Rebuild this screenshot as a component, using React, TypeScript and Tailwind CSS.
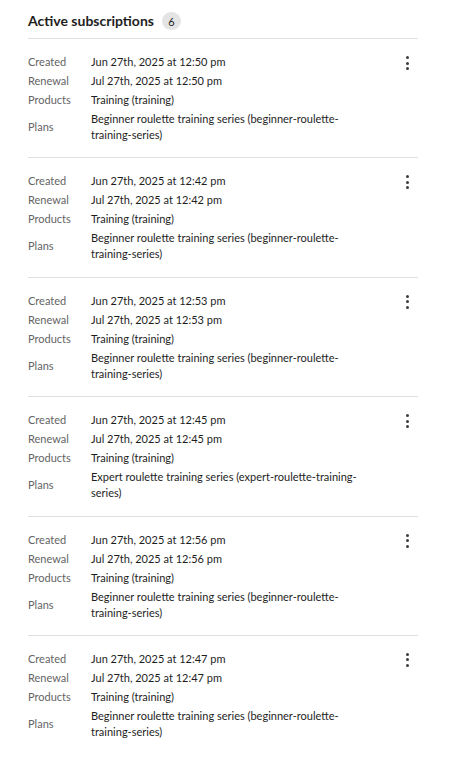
const subscriptions = [
  { created: "Jun 27th, 2025 at 12:50 pm", renewal: "Jul 27th, 2025 at 12:50 pm", plan: "Beginner roulette training series (beginner-roulette-training-series)" },
  { created: "Jun 27th, 2025 at 12:42 pm", renewal: "Jul 27th, 2025 at 12:42 pm", plan: "Beginner roulette training series (beginner-roulette-training-series)" },
  { created: "Jun 27th, 2025 at 12:53 pm", renewal: "Jul 27th, 2025 at 12:53 pm", plan: "Beginner roulette training series (beginner-roulette-training-series)" },
  { created: "Jun 27th, 2025 at 12:45 pm", renewal: "Jul 27th, 2025 at 12:45 pm", plan: "Expert roulette training series (expert-roulette-training-series)" },
  { created: "Jun 27th, 2025 at 12:56 pm", renewal: "Jul 27th, 2025 at 12:56 pm", plan: "Beginner roulette training series (beginner-roulette-training-series)" },
  { created: "Jun 27th, 2025 at 12:47 pm", renewal: "Jul 27th, 2025 at 12:47 pm", plan: "Beginner roulette training series (beginner-roulette-training-series)" },
];

function Kebab() {
  return (
    <button className="flex w-[6px] flex-col items-center gap-[2.5px]">
      <span className="h-[3px] w-[3px] rounded-full bg-[#3c3c3c]" />
      <span className="h-[3px] w-[3px] rounded-full bg-[#3c3c3c]" />
      <span className="h-[3px] w-[3px] rounded-full bg-[#3c3c3c]" />
    </button>
  );
}

export default function App() {
  return (
    <div className="min-h-screen bg-white pl-[28px] pr-[31px] pt-[12px] font-['Lato',sans-serif] text-[11px] text-[#1e1e1e]">
      <div className="flex items-center gap-[8px] pb-[8px]">
        <h2 className="text-[14px] font-bold leading-[18px] text-[#1e1e1e]">Active subscriptions</h2>
        <span className="flex h-[18px] min-w-[19px] items-center justify-center rounded-full bg-[#e4e4e4] px-[6px] text-[11px] leading-none text-[#1e1e1e]">
          6
        </span>
      </div>

      <div>
        {subscriptions.map((s, i) => (
          <div key={i} className="flex items-start border-t border-[#e0e0e0] pt-[15px] pb-[14.4px]">
            <div className="grid flex-1 grid-cols-[63px_282px] gap-y-[3px] leading-[16px]">
              <span className="text-[#646464]">Created</span>
              <span>{s.created}</span>
              <span className="text-[#646464]">Renewal</span>
              <span>{s.renewal}</span>
              <span className="text-[#646464]">Products</span>
              <span>Training (training)</span>
              <span className="self-center text-[#646464]">Plans</span>
              <span>{s.plan}</span>
            </div>
            <div className="mt-[2px] mr-[8px]">
              <Kebab />
            </div>
          </div>
        ))}
      </div>
    </div>
  );
}
